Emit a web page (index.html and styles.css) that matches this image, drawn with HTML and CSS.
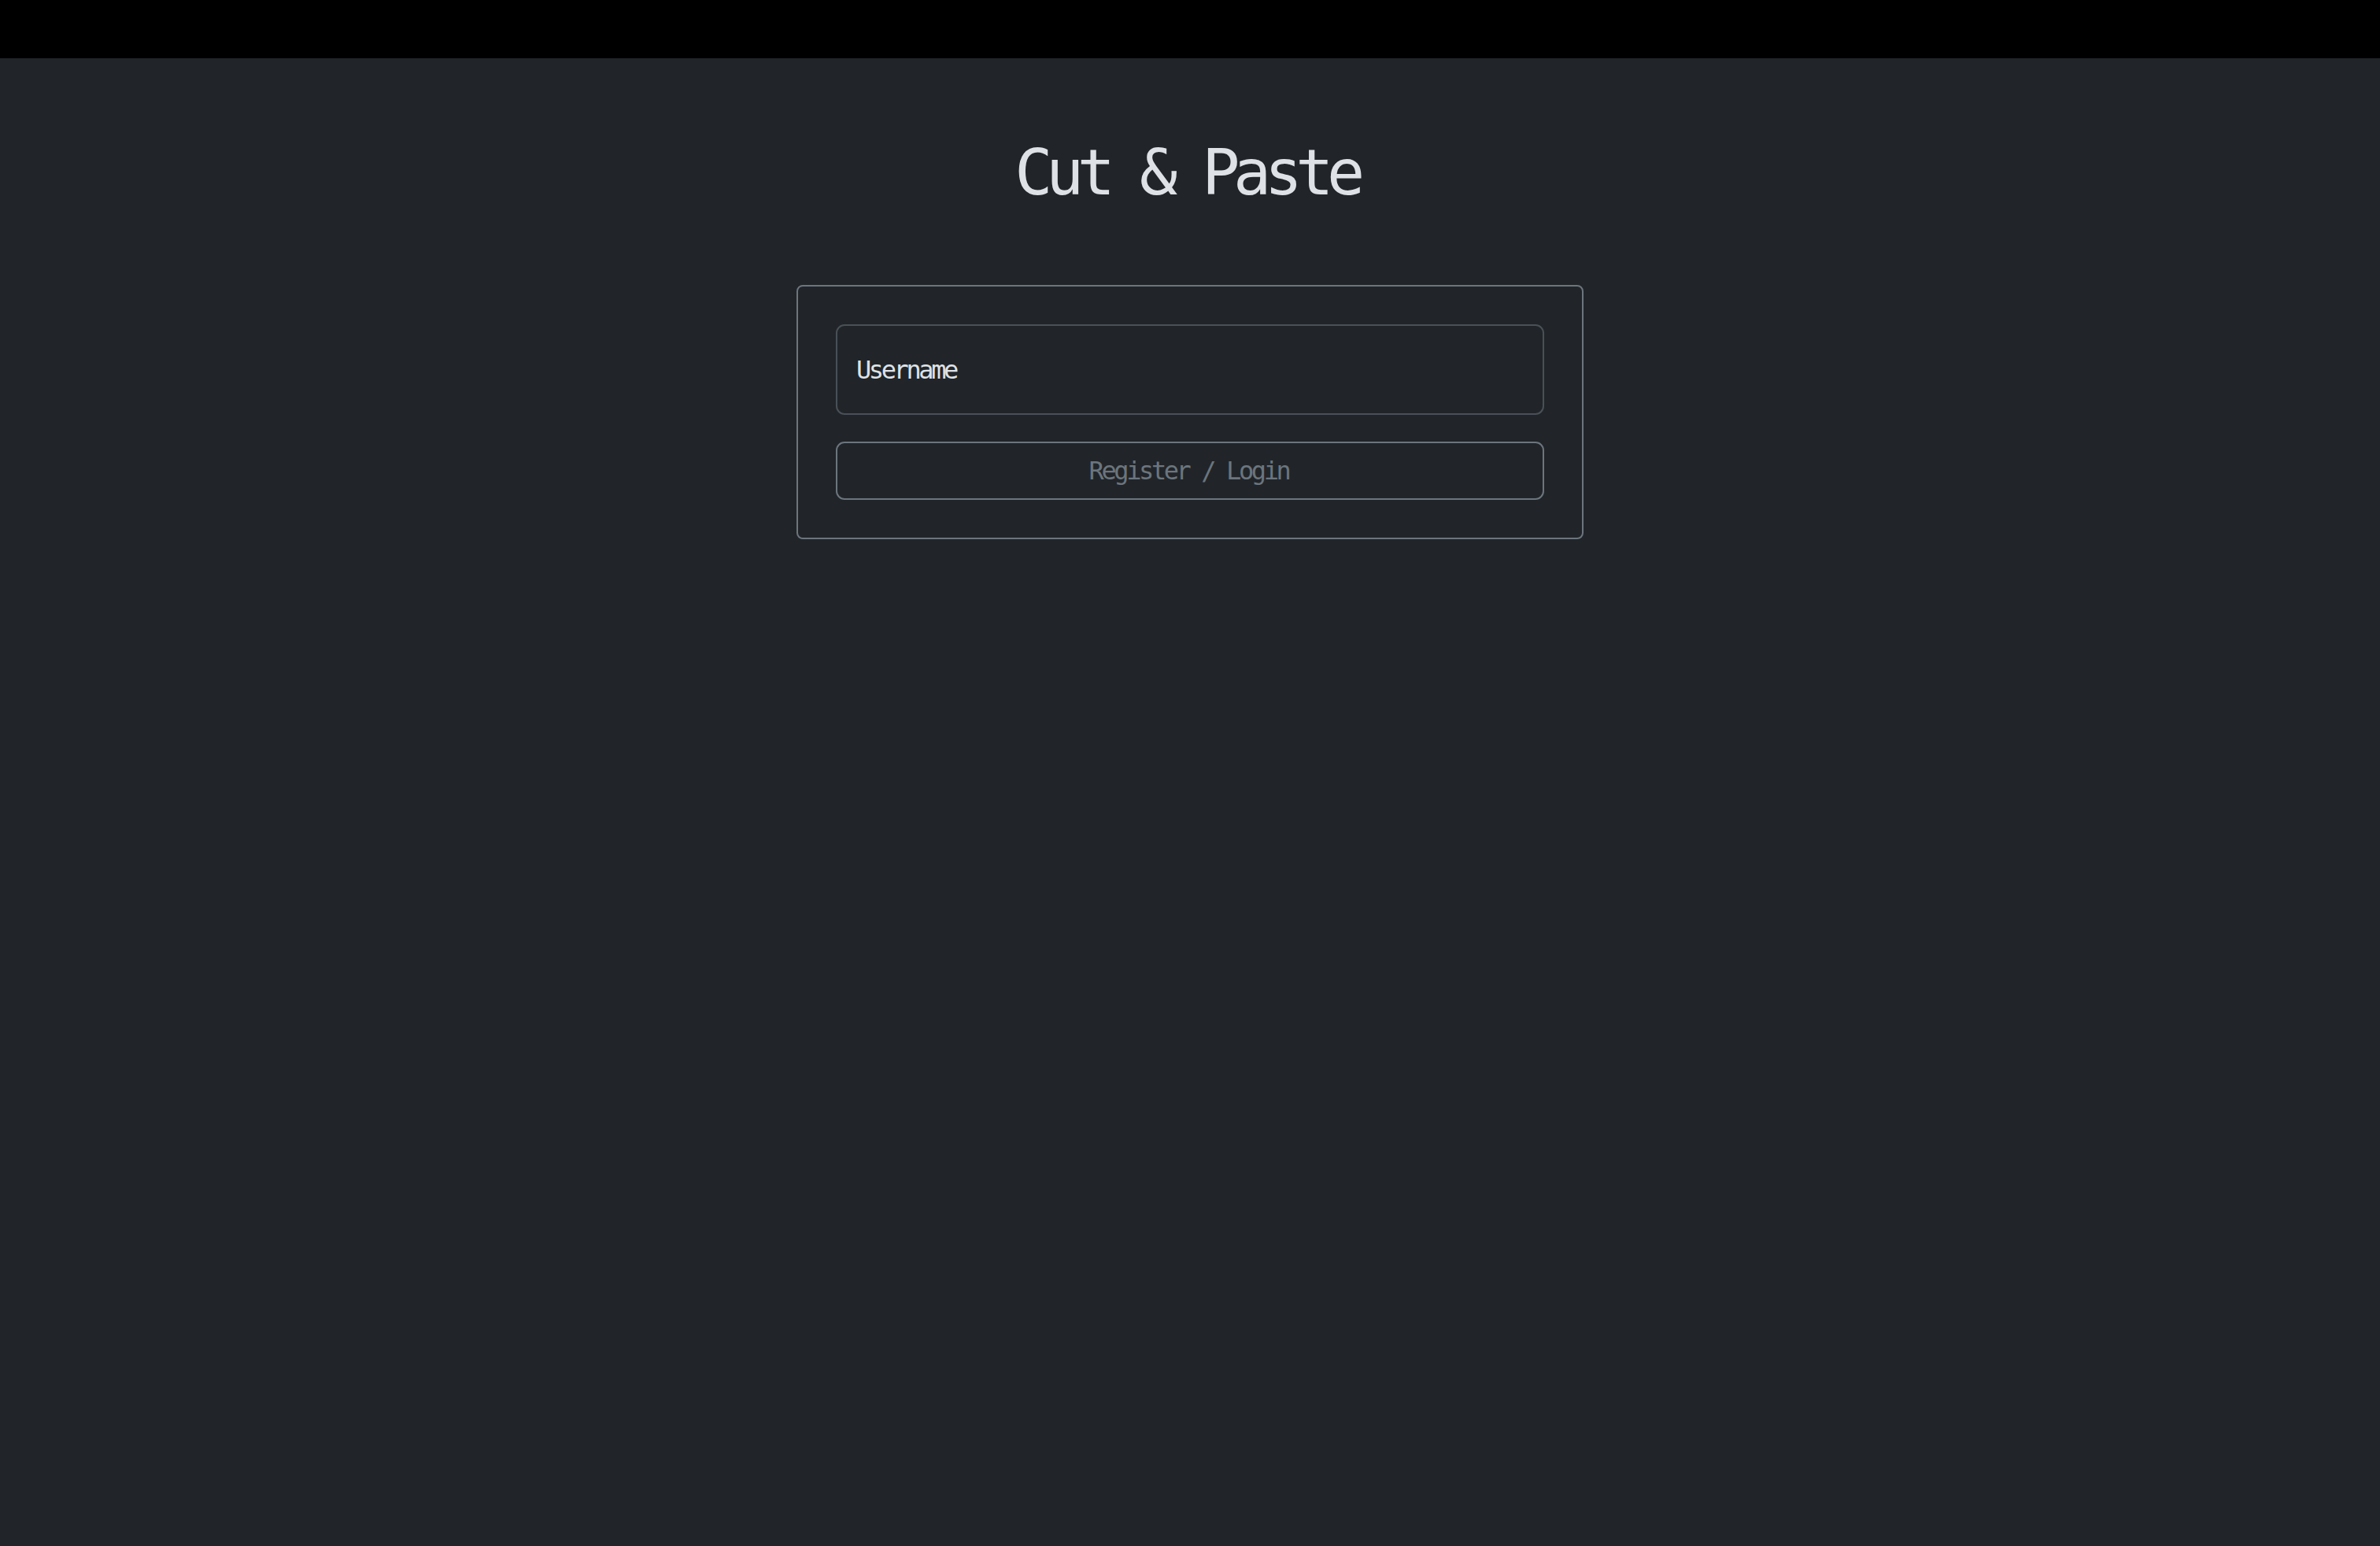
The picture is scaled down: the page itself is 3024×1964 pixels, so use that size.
FILE: index.html
```html
<!DOCTYPE html>
<html lang="en">
<head>
<meta charset="utf-8">
<title>Cut &amp; Paste</title>
<link rel="stylesheet" href="styles.css">
</head>
<body>
<div class="topbar"></div>
<main class="main">
  <h1 class="title">Cut &amp; Paste</h1>
  <form class="card">
    <input class="field" type="text" placeholder="Username">
    <button class="btn" type="button">Register / Login</button>
  </form>
</main>
</body>
</html>
```
FILE: styles.css
```css
html, body {
  margin: 0;
  padding: 0;
  background: #212529;
  height: 100%;
}
body {
  font-family: "DejaVu Sans Mono", "Liberation Mono", monospace;
  color: #dee2e6;
}
.topbar {
  height: 74px;
  background: #000;
}
.main {
  display: flex;
  flex-direction: column;
  align-items: center;
  padding-top: 98px;
}
.title {
  margin: 0 0 94px 0;
  padding-right: 9px;
  font-size: 80px;
  line-height: 96px;
  font-weight: normal;
  letter-spacing: -8.5px;
  color: #dee2e6;
}
.card {
  box-sizing: border-box;
  width: 1000px;
  border: 2px solid #6c757d;
  border-radius: 8px;
  padding: 48px;
  display: flex;
  flex-direction: column;
  gap: 34px;
}
.field {
  box-sizing: border-box;
  height: 115px;
  width: 100%;
  border: 2px solid #495057;
  border-radius: 11px;
  background: #212529;
  padding: 0 24px;
  font-family: inherit;
  font-size: 32px;
  letter-spacing: -3.4px;
  color: #dee2e6;
  outline: none;
}
.field::placeholder {
  color: #dee2e6;
  opacity: 1;
}
.btn {
  box-sizing: border-box;
  height: 74px;
  width: 100%;
  border: 2px solid #6c757d;
  border-radius: 11px;
  background: transparent;
  font-family: inherit;
  font-size: 32px;
  letter-spacing: -3.4px;
  color: #6c757d;
  padding: 0 3px 0 0;
}
```
